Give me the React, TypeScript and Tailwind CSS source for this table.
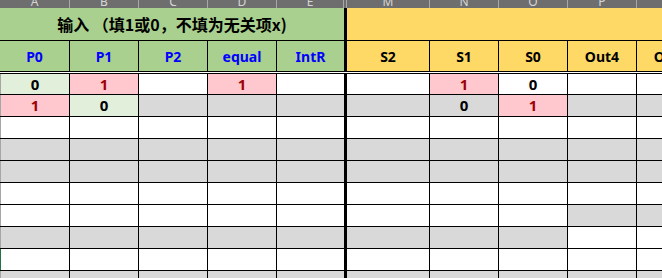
import React from "react";

type Fill = "w" | "g" | "lg" | "p";

const FILL: Record<Fill, string> = {
  w: "bg-white",
  g: "bg-[#d9d9d9]",
  lg: "bg-[#e2efda]",
  p: "bg-[#ffc7ce]",
};

// widths incl. right border: A has the gray row-header edge on its left
const LEFT_W = ["w-[70px]", "w-[69px]", "w-[69px]", "w-[69px]"];
const RIGHT_W = ["w-[83px]", "w-[69px]", "w-[69px]", "w-[69px]", "w-[69px]"];

const LEFT_HEAD = ["P0", "P1", "P2", "equal", "IntR"];
const RIGHT_HEAD = ["S2", "S1", "S0", "Out4", "Out3"];

type Cell = { f: Fill; v?: string };
type Row = { left: Cell[]; right: Cell[]; h: string; edge?: string };

const all = (f: Fill, n: number): Cell[] => Array.from({ length: n }, () => ({ f }));

const ROWS: Row[] = [
  {
    h: "h-[21px]",
    left: [{ f: "lg", v: "0" }, { f: "p", v: "1" }, { f: "w" }, { f: "p", v: "1" }, { f: "w" }],
    right: [{ f: "w" }, { f: "p", v: "1" }, { f: "w", v: "0" }, { f: "w" }, { f: "w" }],
  },
  {
    h: "h-[22px]",
    left: [{ f: "p", v: "1" }, { f: "lg", v: "0" }, { f: "g" }, { f: "g" }, { f: "g" }],
    right: [{ f: "g" }, { f: "g", v: "0" }, { f: "p", v: "1" }, { f: "g" }, { f: "g" }],
  },
  { h: "h-[22px]", left: all("w", 5), right: all("w", 5) },
  { h: "h-[22px]", left: all("g", 5), right: all("g", 5) },
  { h: "h-[22px]", left: all("g", 5), right: all("g", 5) },
  { h: "h-[22px]", left: all("w", 5), right: all("w", 5) },
  { h: "h-[22px]", left: all("w", 5), right: [...all("w", 3), ...all("g", 2)] },
  { h: "h-[22px]", left: all("g", 5), right: [...all("g", 3), ...all("w", 2)] },
  { h: "h-[22px]", left: all("w", 5), right: all("w", 5), edge: "border-l-[#217346]" },
  { h: "h-[22px]", left: all("g", 5), right: all("g", 5) },
];

const font = { fontFamily: '"Noto Sans", "Noto Sans CJK SC", sans-serif' };

function Value({ v }: { v?: string }) {
  if (!v) return null;
  return (
    <span className={`text-[15px] font-bold leading-none ${v === "1" ? "text-[#9c0006]" : "text-black"}`}>{v}</span>
  );
}

function ColLetters() {
  const left = ["A", "B", "C", "D"];
  const right = ["M", "N", "O", "P", "Q"];
  const letter = "text-[12px] leading-[12px] text-[#d6d6d6]";
  return (
    <div className="flex h-[8px] bg-[#6e6e6e] overflow-hidden">
      {left.map((l, i) => (
        <div key={l} className={`${LEFT_W[i]} shrink-0 flex items-end justify-center border-r border-[#a8a8a8]`}>
          <span className={letter}>{l}</span>
        </div>
      ))}
      <div className="w-[67px] shrink-0 flex items-end justify-center border-r border-[#a8a8a8]">
        <span className={letter}>E</span>
      </div>
      <div className="w-[3px] shrink-0 border-r border-[#a8a8a8]" />
      {right.map((l, i) => (
        <div key={l} className={`${RIGHT_W[i]} shrink-0 flex items-end justify-center border-r border-[#a8a8a8]`}>
          <span className={letter}>{l}</span>
        </div>
      ))}
    </div>
  );
}

export default function App() {
  return (
    <div className="w-[662px] h-[278px] overflow-hidden bg-white" style={font}>
      <ColLetters />

      {/* title row */}
      <div className="flex h-[33px] border-b border-black">
        <div
          className="w-[347px] shrink-0 bg-[#a9d08e] border-r-[3px] border-black flex items-center justify-center text-[16px] font-bold text-black"
          style={{ fontFamily: '"Noto Sans CJK SC", sans-serif' }}
        >
          输入 （填1或0，不填为无关项x)
        </div>
        <div className="flex-1 bg-[#ffd966]" />
      </div>

      {/* column names */}
      <div className="flex h-[33px] border-b-[3px] border-double border-black">
        {LEFT_HEAD.map((t, i) => (
          <div
            key={t}
            className={`${i < 4 ? LEFT_W[i] + " border-r" : "w-[70px] border-r-[3px]"} shrink-0 bg-[#a9d08e] border-black flex items-center justify-center text-[14px] font-bold text-[#0000ff]`}
          >
            {t}
          </div>
        ))}
        {RIGHT_HEAD.map((t, i) => (
          <div
            key={t}
            className={`${RIGHT_W[i]} shrink-0 bg-[#ffd966] border-r border-black flex items-center justify-center text-[14px] font-bold text-black`}
          >
            {t}
          </div>
        ))}
      </div>

      {ROWS.map((row, r) => (
        <div key={r} className={`flex ${row.h} border-b border-black`}>
          {row.left.map((c, i) => (
            <div
              key={i}
              className={`${i < 4 ? LEFT_W[i] + " border-r" : "w-[70px] border-r-[3px]"} ${
                i === 0 ? "border-l " + (row.edge ?? "border-l-[#a6a6a6]") : ""
              } shrink-0 border-r-black ${FILL[c.f]} flex items-center justify-center`}
            >
              <Value v={c.v} />
            </div>
          ))}
          {row.right.map((c, i) => (
            <div
              key={i}
              className={`${RIGHT_W[i]} shrink-0 border-r border-black ${FILL[c.f]} flex items-center justify-center`}
            >
              <Value v={c.v} />
            </div>
          ))}
        </div>
      ))}
    </div>
  );
}
